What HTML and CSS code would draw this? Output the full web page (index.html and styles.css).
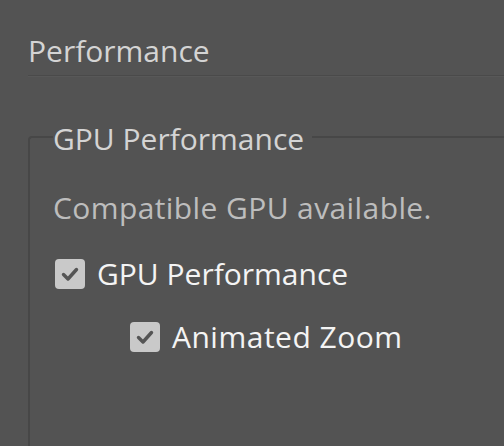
FILE: index.html
```html
<!DOCTYPE html>
<html>
<head>
<meta charset="utf-8">
<link rel="stylesheet" href="styles.css">
</head>
<body>
<div class="panel">
  <h1 class="title">Performance</h1>
  <div class="rule"></div>
  <fieldset class="group">
    <legend class="legend">GPU Performance</legend>
    <p class="status">Compatible GPU available.</p>
    <label class="check">
      <span class="box"><svg viewBox="0 0 30 30" width="30" height="30"><path d="M8.5 15.5 L13 20 L21.5 10.5" fill="none" stroke="#555" stroke-width="3.4" stroke-linecap="round" stroke-linejoin="round"/></svg></span>
      <span class="label">GPU Performance</span>
    </label>
    <label class="check sub">
      <span class="box"><svg viewBox="0 0 30 30" width="30" height="30"><path d="M8.5 15.5 L13 20 L21.5 10.5" fill="none" stroke="#555" stroke-width="3.4" stroke-linecap="round" stroke-linejoin="round"/></svg></span>
      <span class="label wide">Animated Zoom</span>
    </label>
  </fieldset>
</div>
</body>
</html>
```
FILE: styles.css
```css
html, body {
  margin: 0;
  padding: 0;
  background: #535353;
  height: 100%;
  overflow: hidden;
}
.panel {
  font-family: "Open Sans", "Noto Sans", sans-serif;
  padding: 31px 0 0 28px;
  height: 100%;
  box-sizing: border-box;
  display: flex;
  flex-direction: column;
}
.title {
  margin: 0;
  font-size: 30px;
  font-weight: 400;
  line-height: 40px;
  color: #d4d4d4;
}
.rule {
  margin-top: 4px;
  height: 1px;
  background: #4a4a4a;
  border-bottom: 1px solid #585858;
}
.group {
  flex: 1;
  margin: 38px 0 0 0;
  padding: 0 0 0 23px;
  border: 2px solid #474747;
  border-right: none;
  border-bottom: none;
  border-radius: 4px 0 0 0;
  min-width: 0;
}
.legend {
  padding: 4px 8px 0 0;
  margin-left: 0;
  font-size: 30px;
  line-height: 40px;
  color: #d4d4d4;
}
.status {
  margin: 29px 0 0 0;
  font-size: 30px;
  line-height: 40px;
  letter-spacing: 0.4px;
  color: #bdbdbd;
}
.check {
  display: flex;
  align-items: center;
  gap: 12px;
  margin-top: 26px;
  margin-left: 2px;
}
.check.sub {
  margin-top: 23px;
  margin-left: 77px;
}
.box {
  width: 30px;
  height: 30px;
  border-radius: 4px;
  background: #c9c9c9;
  display: flex;
}
.label {
  font-size: 30px;
  line-height: 40px;
  color: #f4f4f4;
}
.label.wide {
  letter-spacing: 0.5px;
}
```
